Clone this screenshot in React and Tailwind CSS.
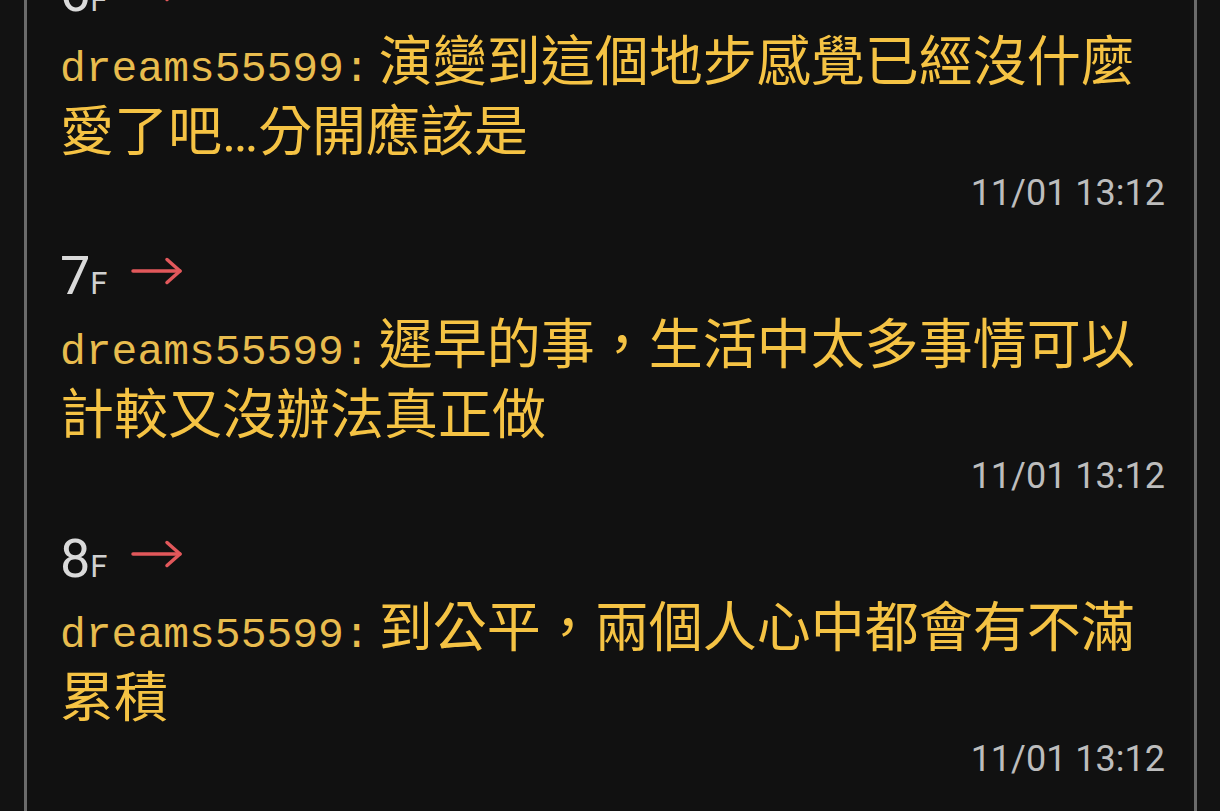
import React from "react";

const floors = [
  { n: 6, text: ["演變到這個地步感覺已經沒什麼愛了吧", "…", "分開應該是"] },
  { n: 7, text: ["遲早的事，生活中太多事情可以計較又沒辦法真正做"] },
  { n: 8, text: ["到公平，兩個人心中都會有不滿累積"] },
];

function Arrow() {
  return (
    <svg
      width="52"
      height="28"
      viewBox="0 0 52 28"
      className="inline-block ml-[23px] align-[9px]"
      fill="none"
      stroke="#e2585b"
      strokeWidth="3.5"
      strokeLinecap="round"
      strokeLinejoin="round"
    >
      <path d="M2 14 H49" />
      <path d="M36 2.5 L49 14 L36 25.5" />
    </svg>
  );
}

function Floor({ n, text }) {
  return (
    <div className="pb-[30px]">
      <div className="h-[60px] leading-[60px] text-[54px] text-[#dadada] font-['Roboto',sans-serif] whitespace-nowrap">
        {n}
        <span className="text-[31px] leading-none text-[#d0d0d0]">F</span>
        <Arrow />
      </div>
      <div className="text-[54px] leading-[70px] text-[#f5c344] font-['Noto_Sans_CJK_TC','Noto_Sans_CJK_SC',sans-serif]">
        <span className="mr-[9px] text-[43px] leading-none text-[#e8bc4e] font-['Liberation_Mono',monospace]">
          dreams55599:
        </span>
        {text.map((t, i) =>
          t === "…" ? (
            <span key={i} className="leading-none font-['Roboto',sans-serif]">
              …
            </span>
          ) : (
            <React.Fragment key={i}>{t}</React.Fragment>
          )
        )}
      </div>
      <div className="mt-[7px] h-[46px] leading-[46px] text-right text-[36px] text-[#bdbdbd] font-['Roboto',sans-serif]">
        11/01 13:12
      </div>
    </div>
  );
}

export default function App() {
  return (
    <div className="h-[811px] w-[1220px] overflow-hidden bg-[#121212] flex">
      <div className="ml-[24px] w-[1173px] h-full border-l-[3px] border-r-[3px] border-[#6b6b6b] bg-[#111111] pl-[33px] pr-[29px] overflow-hidden">
        <div className="-mt-[37px]">
          {floors.map((f) => (
            <Floor key={f.n} {...f} />
          ))}
        </div>
      </div>
    </div>
  );
}
